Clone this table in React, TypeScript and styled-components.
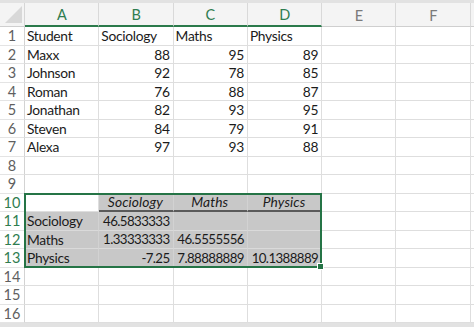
import styled, { createGlobalStyle } from 'styled-components';

const GlobalStyle = createGlobalStyle`
  html, body {
    margin: 0;
    padding: 0;
    background: #ffffff;
  }
  body {
    font-family: Lato, "Open Sans", sans-serif;
    overflow: hidden;
  }
`;

const COL_W = 74.3;
const ROW_H = 18.5;
const HEAD_H = 24;

const Frame = styled.div`
  padding-top: 3px;
  background: #e2e2e2;
  width: 474px;
  height: 327px;
  box-sizing: border-box;
  overflow: hidden;
`;

const Sheet = styled.div`
  position: relative;
  display: grid;
  grid-template-columns: 25px repeat(6, ${COL_W}px) 1fr;
  grid-template-rows: ${HEAD_H}px;
  grid-auto-rows: ${ROW_H}px;
  background: #ffffff;
  color: #1b1b1b;
  font-size: 13.8px;
  letter-spacing: -0.3px;
`;

const Corner = styled.div`
  background: #f4f4f4;
  border-right: 1px solid #d6d6d6;
  border-bottom: 1px solid #cfcfcf;
  box-sizing: border-box;
  display: flex;
  align-items: flex-end;
  justify-content: flex-end;
  padding: 0 2px 3px 0;
`;

const ColHead = styled.div<{ $active?: boolean }>`
  background: #f4f4f4;
  border-right: 1px solid #d9d9d9;
  border-bottom: ${(p) => (p.$active ? '2px solid #2b7a4b' : '1px solid #cfcfcf')};
  box-sizing: border-box;
  display: flex;
  align-items: center;
  justify-content: center;
  color: ${(p) => (p.$active ? '#2f7d50' : '#7a7a7a')};
  font-size: 14.5px;
  padding-top: 1px;
`;

const RowHead = styled.div<{ $active?: boolean }>`
  background: #ffffff;
  border-right: 1px solid ${(p) => (p.$active ? '#2b7a4b' : '#d3d3d3')};
  border-bottom: 1px solid #e4e4e4;
  box-sizing: border-box;
  display: flex;
  align-items: center;
  justify-content: center;
  color: ${(p) => (p.$active ? '#2f7d50' : '#5f5f5f')};
  font-size: 14.5px;
  letter-spacing: 0;
`;

const Cell = styled.div<{
  $align?: 'left' | 'right' | 'center';
  $italic?: boolean;
  $fill?: boolean;
  $rule?: boolean;
  $tight?: boolean;
}>`
  box-sizing: border-box;
  display: flex;
  align-items: center;
  justify-content: ${(p) =>
    p.$align === 'right' ? 'flex-end' : p.$align === 'center' ? 'center' : 'flex-start'};
  padding: 0 3px 0 2px;
  white-space: nowrap;
  overflow: hidden;
  font-style: ${(p) => (p.$italic ? 'italic' : 'normal')};
  font-size: ${(p) => (p.$tight ? '13.3px' : 'inherit')};
  letter-spacing: ${(p) => (p.$tight ? '-0.6px' : p.$italic ? '0.1px' : '-0.3px')};
  background: ${(p) => (p.$fill ? '#c8c8c8' : 'transparent')};
  border-right: 1px solid ${(p) => (p.$fill ? '#d2d2d2' : '#dedede')};
  border-bottom: ${(p) =>
    p.$rule ? '2px solid #5a5a5a' : `1px solid ${p.$fill ? '#dadada' : '#dedede'}`};
`;

const Selection = styled.div`
  position: absolute;
  left: 24px;
  top: ${HEAD_H + 9 * ROW_H - 1}px;
  width: ${4 * COL_W + 1}px;
  height: ${4 * ROW_H + 1}px;
  border: 2px solid #257446;
  box-sizing: border-box;
  pointer-events: none;
`;

const Handle = styled.div`
  position: absolute;
  right: -4px;
  bottom: -4px;
  width: 5px;
  height: 5px;
  background: #257446;
  border: 1px solid #ffffff;
`;

type Val = string | number | undefined;

interface RowSpec {
  cells: Val[];
  kind?: 'data' | 'head' | 'matrix';
}

const rows: RowSpec[] = [
  { cells: ['Student', 'Sociology', 'Maths', 'Physics'] },
  { cells: ['Maxx', 88, 95, 89] },
  { cells: ['Johnson', 92, 78, 85] },
  { cells: ['Roman', 76, 88, 87] },
  { cells: ['Jonathan', 82, 93, 95] },
  { cells: ['Steven', 84, 79, 91] },
  { cells: ['Alexa', 97, 93, 88] },
  { cells: [] },
  { cells: [] },
  { cells: ['', 'Sociology', 'Maths', 'Physics'], kind: 'head' },
  { cells: ['Sociology', '46.5833333'], kind: 'matrix' },
  { cells: ['Maths', '1.33333333', '46.5555556'], kind: 'matrix' },
  { cells: ['Physics', '-7.25', '7.88888889', '10.1388889'], kind: 'matrix' },
  { cells: [] },
  { cells: [] },
  { cells: [] },
];

const letters = ['A', 'B', 'C', 'D', 'E', 'F', ''];

function CornerMark() {
  return (
    <svg width="17" height="17" viewBox="0 0 17 17">
      <polygon points="17,0 17,17 0,17" fill="#d8d8d8" />
    </svg>
  );
}

function App() {
  return (
    <Frame>
      <GlobalStyle />
      <Sheet>
        <Corner>
          <CornerMark />
        </Corner>
        {letters.map((l, i) => (
          <ColHead key={i} $active={i < 4}>
            {l}
          </ColHead>
        ))}
        {rows.map((row, r) => {
          const n = r + 1;
          return [
            <RowHead key={`h${n}`} $active={n >= 10 && n <= 13}>
              {n}
            </RowHead>,
            ...letters.map((_, c) => {
              const v = row.cells[c];
              const inBlock = c < 4;
              const isHead = row.kind === 'head' && inBlock;
              const isMatrix = row.kind === 'matrix' && inBlock;
              const fill = isMatrix || (isHead && c > 0);
              let align: 'left' | 'right' | 'center' = 'left';
              if (isHead) align = 'center';
              else if (typeof v === 'number' || (isMatrix && c > 0)) align = 'right';
              return (
                <Cell
                  key={`${n}-${c}`}
                  $align={align}
                  $italic={isHead}
                  $fill={fill}
                  $rule={isHead && c > 0}
                  $tight={isMatrix && c > 0}
                >
                  {v}
                </Cell>
              );
            }),
          ];
        })}
        <Selection>
          <Handle />
        </Selection>
      </Sheet>
    </Frame>
  );
}

export default App;
